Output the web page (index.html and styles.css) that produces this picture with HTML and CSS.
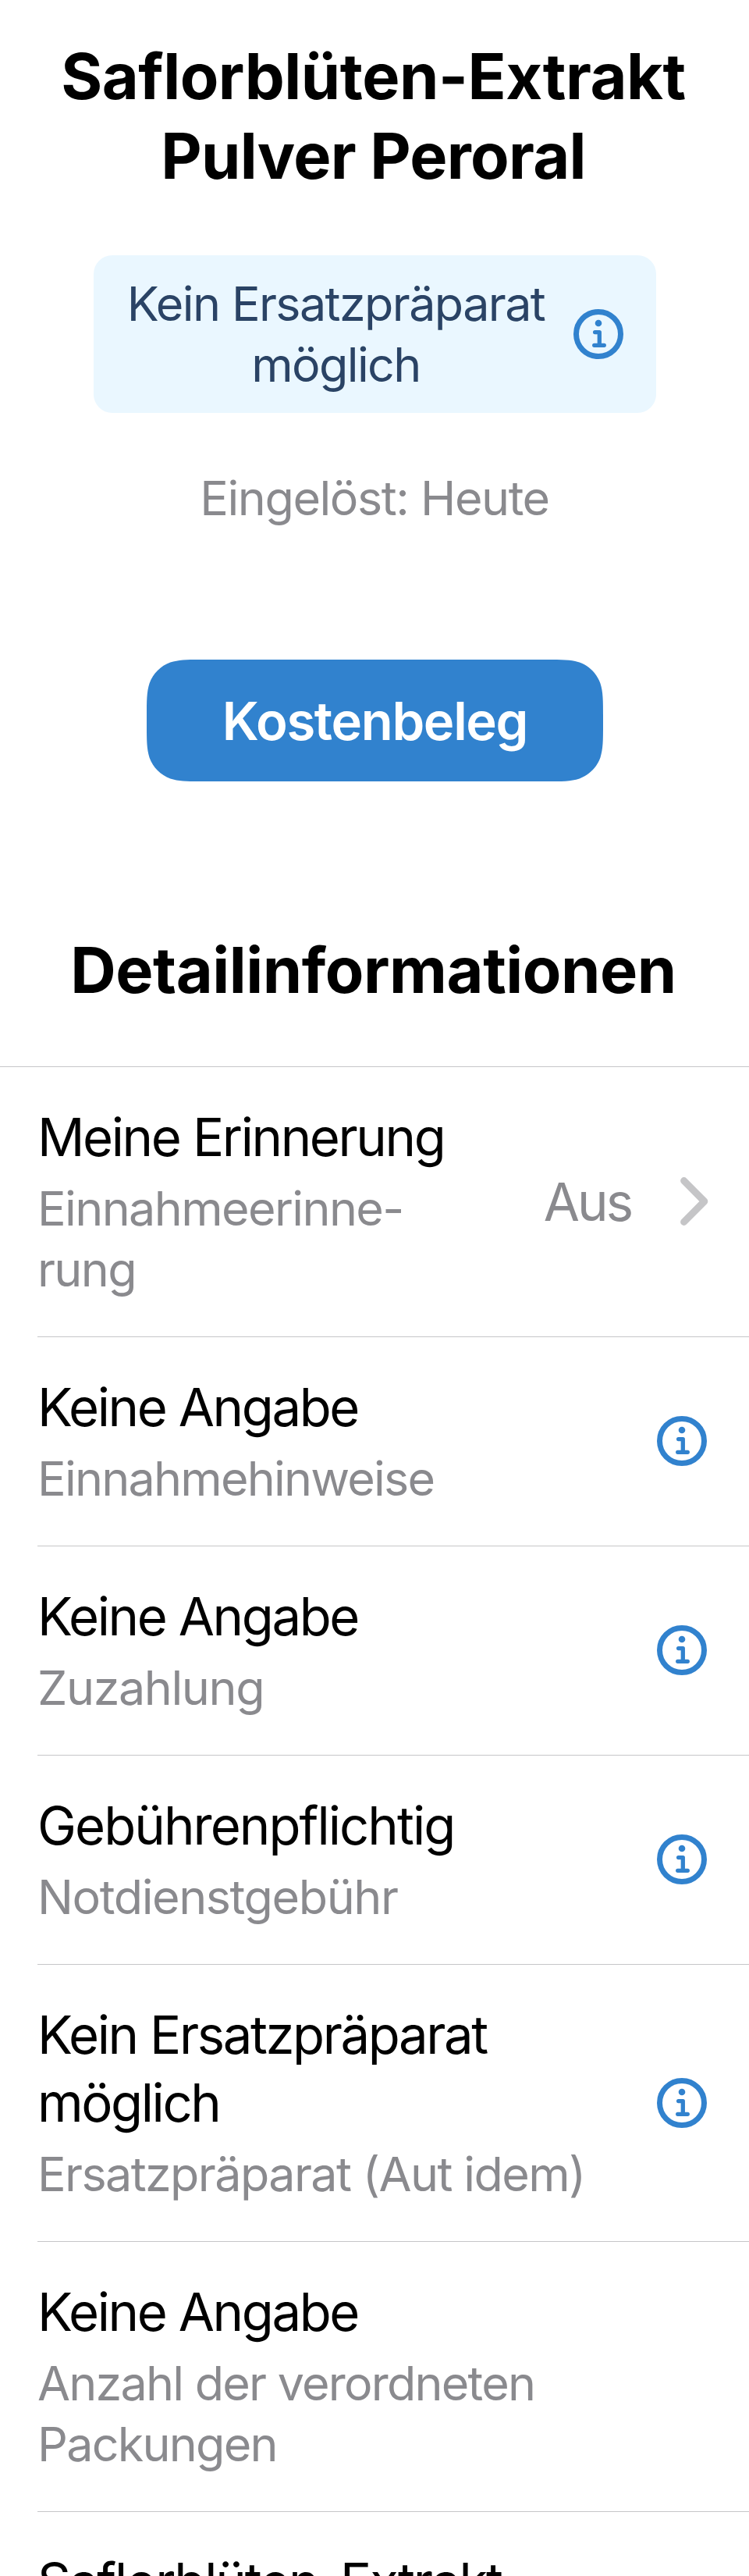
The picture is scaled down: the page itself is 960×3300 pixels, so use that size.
FILE: index.html
```html
<!DOCTYPE html>
<html lang="de">
<head>
<meta charset="utf-8">
<title>Saflorblüten-Extrakt Pulver Peroral</title>
<link rel="stylesheet" href="styles.css">
</head>
<body>
<svg class="sprite" aria-hidden="true">
  <symbol id="info" viewBox="0 0 64 64">
    <circle cx="32" cy="32" r="28.5" fill="none" stroke="currentColor" stroke-width="7"/>
    <circle cx="32" cy="18" r="4.3" fill="currentColor"/>
    <path d="M27.6 29.6H33.3V46.3M26.7 46.3H39.3" fill="none" stroke="currentColor" stroke-width="5.3" stroke-linecap="round" stroke-linejoin="round"/>
  </symbol>
</svg>
<main class="screen">
  <h1 class="title">Saflorblüten-Extrakt<br><span class="title-second">Pulver Peroral</span></h1>
  <div class="banner">
    <span class="banner-text">Kein Ersatzpräparat<br>möglich</span>
    <svg class="info"><use href="#info"/></svg>
  </div>
  <p class="status">Eingelöst: Heute</p>
  <button class="button" type="button">Kostenbeleg</button>
  <h2 class="section-title">Detailinformationen</h2>

  <ul class="list">
    <li class="row row-first">
      <div class="texts">
        <div class="value">Meine Erinnerung</div>
        <div class="label">Einnahmeerinne-<br>rung</div>
      </div>
      <div class="state">Aus</div>
      <svg class="chevron" viewBox="0 0 36 62"><path d="M4.6 4.6L30.8 31L4.6 57.4" fill="none" stroke="currentColor" stroke-width="9" stroke-linecap="round" stroke-linejoin="round"/></svg>
    </li>
    <li class="row">
      <div class="texts">
        <div class="value">Keine Angabe</div>
        <div class="label label-tight">Einnahmehinweise</div>
      </div>
      <svg class="info"><use href="#info"/></svg>
    </li>
    <li class="row">
      <div class="texts">
        <div class="value">Keine Angabe</div>
        <div class="label label-wide">Zuzahlung</div>
      </div>
      <svg class="info"><use href="#info"/></svg>
    </li>
    <li class="row">
      <div class="texts">
        <div class="value value-wide">Gebührenpflichtig</div>
        <div class="label label-wide">Notdienstgebühr</div>
      </div>
      <svg class="info"><use href="#info"/></svg>
    </li>
    <li class="row">
      <div class="texts">
        <div class="value">Kein Ersatzpräparat<br>möglich</div>
        <div class="label">Ersatzpräparat (Aut idem)</div>
      </div>
      <svg class="info"><use href="#info"/></svg>
    </li>
    <li class="row">
      <div class="texts">
        <div class="value">Keine Angabe</div>
        <div class="label label-tight">Anzahl der verordneten<br>Packungen</div>
      </div>
    </li>
    <li class="row">
      <div class="texts">
        <div class="value value-name">Saflorblüten-Extrakt</div>
      </div>
    </li>
  </ul>
</main>
</body>
</html>
```
FILE: styles.css
```css
* {
  box-sizing: border-box;
}

body {
  margin: 0;
  background: #fff;
  color: #000;
  font-family: Inter, "Liberation Sans", sans-serif;
}

.sprite {
  display: none;
}

.screen {
  width: 960px;
  height: 3300px;
  padding-top: 47px;
  overflow: hidden;
}

.title,
.section-title {
  margin: 0;
  padding-right: 3px;
  font-size: 81px;
  font-weight: 700;
  line-height: 102px;
  letter-spacing: -0.45px;
  text-align: center;
}

.title-second {
  letter-spacing: -0.75px;
}

.banner {
  display: flex;
  align-items: center;
  gap: 34px;
  width: 721px;
  height: 202px;
  margin: 76px 0 0 120px;
  padding: 0 42px 0 40px;
  border-radius: 24px;
  background: #eaf7ff;
  color: #2a4365;
}

.banner-text {
  flex: 1;
  font-size: 61px;
  line-height: 78px;
  letter-spacing: -1.6px;
  text-align: center;
  white-space: nowrap;
}

.info {
  flex: none;
  width: 64px;
  height: 64px;
  color: #3182ce;
}

.status {
  margin: 70px 0 0;
  color: #8a8a8e;
  font-size: 61px;
  line-height: 78px;
  letter-spacing: -1.45px;
  text-align: center;
}

.button {
  display: block;
  width: 585px;
  height: 156px;
  margin: 168px 0 0 188px;
  padding: 0;
  border: 0;
  background: #3182ce;
  color: #fff;
  font-family: inherit;
  font-size: 67px;
  font-weight: 600;
  line-height: 87px;
  letter-spacing: -1.35px;
  text-align: center;
  /* continuous corners, radius 48 */
  clip-path: path("M73.4 0H511.6C532.8 0 543.3 0 552.8 3.1L554.7 3.6C567.1 8.1 576.9 17.9 581.4 30.3C585 41.7 585 52.2 585 73.4V82.6C585 103.8 585 114.3 581.4 125.7C576.9 138.1 567.1 147.9 554.7 152.4C543.3 156 532.8 156 511.6 156H73.4C52.2 156 41.7 156 30.3 152.4C17.9 147.9 8.1 138.1 3.6 125.7C0 114.3 0 103.8 0 82.6V73.4C0 52.2 0 41.7 3.6 30.3C8.1 17.9 17.9 8.1 30.3 3.6C41.7 0 52.2 0 73.4 0Z");
}

.section-title {
  margin: 191px 0 72px;
}

.list {
  margin: 0;
  padding: 0;
  border-top: 1px solid #c6c6c8;
  list-style: none;
}

.row {
  display: flex;
  align-items: center;
  margin-left: 48px;
  padding: 46px 54px 47px 0;
  border-top: 1px solid #c6c6c8;
}

.row-first {
  padding-right: 52px;
  border-top: 0;
}

.texts {
  flex: 1;
}

.value,
.state {
  font-size: 67px;
  line-height: 87px;
  letter-spacing: -2.4px;
  white-space: nowrap;
}

.value-wide {
  letter-spacing: -1.95px;
}

.value-name {
  letter-spacing: -2.12px;
}

.label {
  margin-top: 9px;
  color: #8a8a8e;
  font-size: 61px;
  line-height: 78px;
  letter-spacing: -1.6px;
  white-space: nowrap;
}

.label-tight {
  letter-spacing: -1.77px;
}

.label-wide {
  letter-spacing: -1.4px;
}

.state {
  margin-right: 63px;
  color: #8a8a8e;
  letter-spacing: -3px;
}

.chevron {
  flex: none;
  width: 36px;
  height: 62px;
  color: #c5c5c7;
}
```
